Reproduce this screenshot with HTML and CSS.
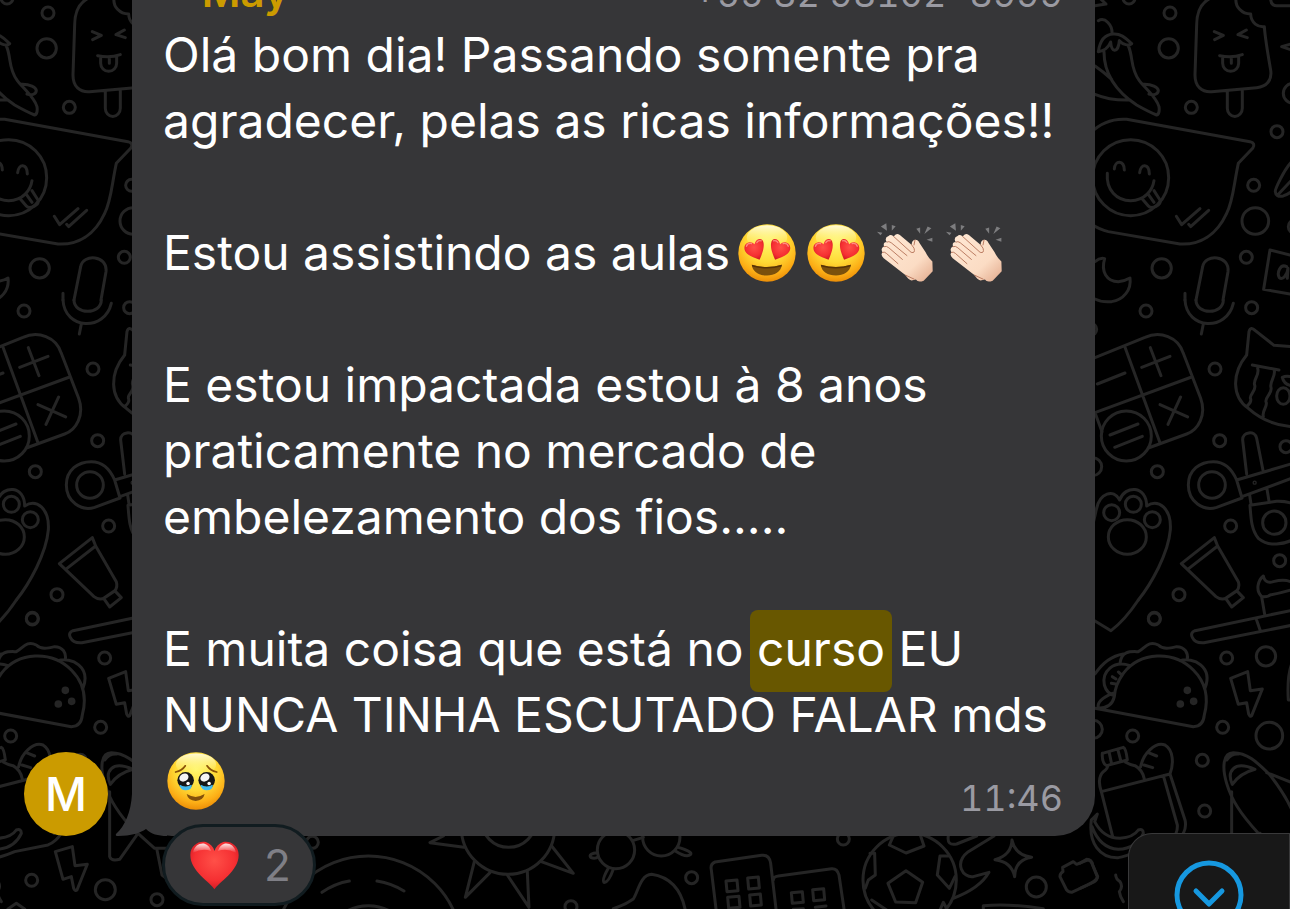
FILE: index.html
```html
<!DOCTYPE html>
<html lang="pt-BR">
<head>
<meta charset="utf-8">
<meta name="viewport" content="width=device-width, initial-scale=1">
<title>Conversa</title>
<link rel="stylesheet" href="styles.css">
</head>
<body>
<svg class="wallpaper" aria-hidden="true">
  <defs>
    <g id="tile">
      <g transform="translate(1080 0) scale(.3333)">
        <circle cx="147" cy="-6" r="18"/><circle cx="270" cy="39" r="18"/><circle cx="266" cy="145" r="29"/><circle cx="334" cy="322" r="18"/><circle cx="591" cy="395" r="18"/><circle cx="521" cy="556" r="18"/><circle cx="526" cy="663" r="40"/><circle cx="499" cy="772" r="18"/><circle cx="245" cy="805" r="29"/><circle cx="640" cy="280" r="30"/><circle cx="645" cy="680" r="20"/>
        <path d="M390-5C362 10 350 35 350 75L345 225C345 260 365 277 395 275L530 263C560 260 577 240 572 210C565 170 556 120 553 80C535 82 513 70 512 42C485 42 465 20 468-5M442 273V325A22 24 0 0 0 487 325V270M403 95L430 106L404 119M499 90L474 104L502 113M419 167Q455 175 487 164M428 170V190A23 23 0 0 0 476 190V168M454 172V190"/>
        <path d="M55 62C75 50 98 75 96 102M55 155C60 120 75 103 100 102C125 100 140 118 155 131C145 138 130 135 118 122C117 140 110 150 104 151C96 150 93 140 92 126C86 140 78 152 55 155M72 155C72 220 110 275 170 315Q205 335 230 345Q240 342 237 320C228 290 200 270 178 242C150 205 160 170 145 138M190 253C215 252 235 262 235 272C234 284 220 286 207 282M45 198Q70 215 95 238M45 283Q90 302 150 300M40 18L78 12L60-5"/>
        <path d="M30 400C60 370 95 355 140 358L510 425Q528 430 518 445L475 490C460 560 460 600 440 640C410 705 360 735 300 732L85 695Q60 690 30 670"/>
        <circle cx="152" cy="533" r="114"/>
        <path d="M103 507C105 480 132 480 133 510M179 518C182 490 207 490 208 522M82 520C78 570 110 602 152 602C195 602 218 570 222 542M187 597L205 618C215 630 245 615 240 600L222 572M205 583L222 607M289 649L305 674L360 626M326 673L332 680L386 631"/>
        <path d="M45 785Q60 772 74 776C62 815 80 845 115 845Q135 843 150 834C155 870 130 900 95 905Q65 908 45 897M348 900L368 800C375 760 450 765 444 815L429 900M315 880L315 900"/>
        <path d="M630 765L570 750L551 868L630 882M620 800C600 790 590 820 598 833C608 842 622 825 624 805L622 835M572-5Q572 17 590 17H640M640 130L605 140L640 152M640 480C610 510 585 570 586 575Q587 592 610 588Q630 580 640 570M595 583L640 535"/>
      </g>
      <g transform="translate(1080 300) scale(.3333)">
        <circle cx="198" cy="33" r="18"/><circle cx="515" cy="23" r="18"/><circle cx="405" cy="207" r="18"/><circle cx="419" cy="422" r="18"/><circle cx="232" cy="515" r="18"/><circle cx="618" cy="440" r="18"/><circle cx="452" cy="678" r="18"/><circle cx="599" cy="782" r="18"/><circle cx="297" cy="884" r="18"/><circle cx="223" cy="955" r="18"/><circle cx="32" cy="88" r="18"/><circle cx="38" cy="500" r="27"/>
        <path d="M315 0C320 90 440 95 460 10M348 0C348 45 430 45 430 0M370 72L364 102"/>
        <path d="M45 173L195 112C240 92 295 110 310 160L362 295C380 345 355 390 320 402L205 444M135 142L240 428M45 338L335 231M45 338L66 395M52 252L135 219M185 202L270 169M211 143L243 227M240 314L323 351M302 291L264 373M90 405L174 372M104 442L187 409"/>
        <circle cx="139" cy="408" r="75"/>
        <path d="M640 140L582 136L526 92Q512 78 507 95L500 165C455 220 455 290 505 325C550 365 600 378 640 380M517 195L597 210M533 205C540 225 518 240 524 255C530 275 505 285 512 297C515 308 505 315 500 320M583 212C587 230 568 245 573 262C578 280 555 290 558 305C565 320 545 330 550 350M640 232Q620 226 607 232Q612 255 640 258"/>
        <ellipse cx="610" cy="288" rx="20" ry="25"/>
        <path d="M486 594L410 622C370 635 325 605 325 555C325 510 360 485 400 485C435 485 455 505 470 540ZM470 540L640 490M486 590L640 533M500 522L488 420C487 395 525 390 530 415L549 511M509 585L513 612M561 567L567 603M640 612Q620 603 590 604L510 616C513 660 515 690 535 715Q560 735 590 732Q620 730 640 718"/>
        <circle cx="396" cy="555" r="40"/><circle cx="583" cy="668" r="35"/><circle cx="524" cy="548" r="2"/>
        <path d="M30 700C45 660 45 640 50 625C60 580 100 565 119 600C135 555 200 555 200 618C235 595 275 625 271 690C265 760 215 850 175 900"/>
        <circle cx="95" cy="638" r="24"/><circle cx="160" cy="613" r="24"/><circle cx="217" cy="659" r="24"/><ellipse cx="142" cy="711" rx="57" ry="52"/>
        <path d="M403 713L304 791L408 890Q425 903 441 893L470 873Q480 862 475 845L413 738ZM413 738L326 806M437 895L470 872L490 893L455 921ZM554 943L545 890C525 870 535 840 550 828C555 850 570 848 580 845Q620 835 640 850M545 890Q565 892 570 885Q600 880 640 868"/>
      </g>
      <g transform="translate(1080 600) scale(.3333)">
        <circle cx="223" cy="57" r="18"/><circle cx="440" cy="174" r="18"/><circle cx="558" cy="169" r="29"/><circle cx="428" cy="382" r="18"/><circle cx="568" cy="407" r="40"/><circle cx="158" cy="408" r="18"/><circle cx="367" cy="481" r="18"/><circle cx="374" cy="633" r="18"/><circle cx="40" cy="388" r="27"/><circle cx="221" cy="841" r="18"/><circle cx="442" cy="869" r="30"/><circle cx="597" cy="899" r="18"/>
        <path d="M175 0Q135 60 93 92L40 60M640 30L345 92Q330 98 337 112Q345 130 372 128L640 75M528 55L541 92"/>
        <path d="M45 325L340 380Q370 380 373 345C385 300 380 250 340 210C280 150 180 155 130 220Q105 255 103 290Q95 325 55 325Q48 300 98 280M120 190C125 150 155 155 175 155C195 145 205 120 235 135C250 150 270 145 290 140C315 140 325 160 322 178M300 182C340 170 400 200 375 265M45 222Q80 170 130 162M150 197C100 180 65 215 73 255Q80 280 103 287M97 230L108 237M94 250L107 252M115 216L124 224"/>
        <g class="wallpaper__dots"><circle cx="322" cy="271" r="7"/><circle cx="301" cy="312" r="7"/><circle cx="341" cy="304" r="7"/></g>
        <path d="M452 235L503 215L511 272L547 267L515 347Q510 352 506 342L500 308L475 313ZM292 755L343 740L351 797L388 793L357 870Q352 875 347 865L340 830L315 838Z"/>
        <path d="M67 460L130 442Q138 445 142 480L80 497Q65 490 67 460M87 455L95 492M113 447L123 485M82 497Q85 505 70 515Q50 535 64 575L98 710M64 575L270 522M137 487Q150 495 165 497Q188 510 193 537M182 500C190 460 225 425 255 435C280 450 282 490 270 522L315 660Q320 680 310 700M250 527L292 675Q293 690 288 700M205 458L230 468M192 495L218 503"/>
        <path d="M34 660L52 642L44 665Q70 715 120 715Q160 712 175 690Q190 685 190 700Q170 745 115 748Q60 745 36 680M34 660C25 730 60 775 115 773Q135 770 170 755L270 735Q295 725 310 700M0 790L20 778Q35 778 38 795L53 830Q50 845 0 865M107 825Q108 838 120 845Q130 860 118 875Q120 890 130 905M150 927L175 910L200 927"/>
        <path d="M455 575V770Q460 785 485 778L540 700M535 700C480 640 455 600 440 550C425 500 430 458 460 458C500 458 530 485 570 525Q620 590 640 640M457 553C440 515 460 480 525 508Q480 520 457 553M440 480Q455 460 475 462M560 518L640 550M540 700L590 745H630M596 745L612 825L625 835"/>
        <path d="M640 180Q620 220 625 300H640"/>
      </g>
    </g>
  </defs>
  <use href="#tile"/>
  <use href="#tile" x="-1122"/>
  <g transform="translate(300 820) scale(.3333)">
    <circle cx="37" cy="67" r="18"/><circle cx="813" cy="260" r="18"/><circle cx="1175" cy="173" r="18"/><circle cx="624" cy="23" r="140"/><circle cx="626" cy="0" r="82"/><circle cx="205" cy="390" r="282"/><circle cx="205" cy="390" r="133"/><circle cx="948" cy="90" r="56"/><circle cx="1084" cy="52" r="56"/>
    <path d="M430 48L390 68L492 82M523 125L496 232L570 158M622 165L687 262L682 155M722 124L820 160L755 78M66 217Q105 190 148 183M231 183Q275 190 312 213M998 62L1030 52M893 98Q865 100 872 112Q885 118 895 110M925 145Q905 180 912 187Q925 190 940 148M1125 92Q1160 115 1172 103Q1178 95 1135 82M940 266Q975 255 1000 237C1015 215 1020 165 1055 163Q1135 175 1155 266"/>
  </g>
  <g transform="translate(690 820) scale(.3333)">
    <circle cx="460" cy="57" r="18"/><circle cx="1039" cy="201" r="30"/><circle cx="659" cy="180" r="140"/>
    <path d="M78 266L64 150Q60 132 75 126L215 106Q238 103 242 130L258 266M250 180Q250 170 265 168L425 146Q442 145 447 165L462 266M108 183L141 180L144 212L111 215ZM173 174L205 171L208 204L176 207ZM113 232L147 229L150 262L116 265ZM179 225L211 222L214 255L182 258ZM304 218L337 215L340 247L307 250ZM368 209L401 206L404 239L371 242ZM310 268L340 266M376 262L408 258"/>
    <path d="M648 152L698 187L677 248L617 246L594 190ZM610 48L598 75L648 99L702 78L692 48M540 100H554L556 165L535 180L526 205M775 108H750L742 165L778 205L795 170M545 240L590 270M750 270L760 247L768 262"/>
    <path d="M966 60Q975 105 1025 112Q975 120 974 170Q965 125 915 119Q965 105 966 60ZM775 48Q770 78 800 72L860 48M912 48L835 95C790 130 820 175 850 170L897 157Q870 205 790 235M1118 142L1150 125L1160 133L1192 120Q1202 120 1206 130L1222 170Q1222 180 1212 186L1145 217Q1135 217 1130 210L1110 170Q1110 160 1119 155ZM880 266V257Q960 250 1060 266"/>
  </g>
</svg>

<svg class="sprite" aria-hidden="true">
  <defs>
    <radialGradient id="skin" cx=".5" cy=".3" r=".72"><stop offset="0" stop-color="#fff66a"/><stop offset=".5" stop-color="#ffda35"/><stop offset=".8" stop-color="#fcae16"/><stop offset="1" stop-color="#e98905"/></radialGradient>
    <linearGradient id="shine" x2="0" y2="1"><stop offset="0" stop-color="#fffde8" stop-opacity=".9"/><stop offset="1" stop-color="#fff66a" stop-opacity="0"/></linearGradient>
    <radialGradient id="love" cx=".5" cy=".4" r=".6"><stop offset="0" stop-color="#ff5048"/><stop offset=".7" stop-color="#f52f32"/><stop offset="1" stop-color="#d51c25"/></radialGradient>
    <linearGradient id="hand" x2="1" y2="1"><stop offset="0" stop-color="#ffe9d5"/><stop offset=".65" stop-color="#fbdcc4"/><stop offset="1" stop-color="#e2a98b"/></linearGradient>
    <linearGradient id="gloss" x2="0" y2="1"><stop offset="0" stop-color="#fff" stop-opacity=".9"/><stop offset="1" stop-color="#fff" stop-opacity="0"/></linearGradient>
  </defs>
  <symbol id="in-love" viewBox="0 0 172 172">
    <circle cx="86" cy="86" r="85" fill="url(#skin)"/><ellipse cx="86" cy="40" rx="60" ry="36" fill="url(#shine)"/>
    <g id="eye-heart"><path d="M64 106C45 98 20 92 19 72C18 54 40 48 49 60C53 42 74 38 76 58C78 74 70 92 64 106Z" fill="url(#love)"/><path d="M25 66Q28 56 40 58M56 55Q60 47 69 50" fill="none" stroke="#ffb0a0" stroke-width="4" stroke-linecap="round" opacity=".7"/></g>
    <use href="#eye-heart" transform="translate(174 0) scale(-1 1)"/>
    <path d="M41 121Q86 134 130 121C128 142 108 153 86 153C62 153 43 142 41 121Z" fill="#7b500c"/><path d="M41 121Q86 134 130 121L129 126Q86 138 42 126Z" fill="#573306"/>
  </symbol>
  <symbol id="clap" viewBox="442 30 180 186">
    <path fill="#7d7d7f" d="M457 41L474 31L476 54ZM445 57L462 60L456 68ZM491 36L503 40L491 54ZM567 48L579 44L579 63ZM614 46L602 41L592 64ZM599 82L617 76V88Z"/>
    <path d="M553 98Q552 85 563 82Q572 81 577 92L596 121Q602 135 617 149L618 180L590 209Q572 216 566 205L552 208Q542 206 534 192L466 139Q455 130 462 121Q455 107 467 103Q463 89 475 89Q467 75 481 70Q487 64 497 72Q504 59 516 67Z" fill="url(#hand)"/>
    <path d="M462 121Q468 118 474 124L510 156M467 103Q475 100 482 107L524 143M476 89Q482 85 489 91L538 131M497 72L551 121Q565 125 560 108L552 97M563 83L560 98M534 192L560 204" fill="none" stroke="#ba795f" stroke-width="3" stroke-linecap="round"/>
  </symbol>
  <symbol id="pleading" viewBox="0 0 168 168">
    <circle cx="84" cy="84" r="83" fill="url(#skin)"/><ellipse cx="84" cy="36" rx="58" ry="32" fill="url(#shine)"/>
    <path id="brow" d="M25 58Q44 54 53 40" fill="none" stroke="#8a5208" stroke-width="5" stroke-linecap="round"/>
    <use href="#brow" transform="translate(169 0) scale(-1 1)"/>
    <g id="pupil"><circle cx="54" cy="82" r="24" fill="#171717"/><path d="M36 96Q54 90 72 96Q70 111 54 111Q39 110 36 96Z" fill="#43b9ec"/><path d="M33 92Q54 108 75 92Q54 94 33 92Z" fill="#171717"/><ellipse cx="49" cy="74" rx="14" ry="11" fill="#f4f4f4" transform="rotate(-30 49 74)"/><circle cx="61" cy="91" r="5" fill="#fff"/></g>
    <use href="#pupil" x="61"/>
    <path d="M57 122Q83 138 109 122Q105 141 83 142Q61 141 57 122Z" fill="#82500b"/>
  </symbol>
  <symbol id="heart" viewBox="0 0 148 148">
    <path d="M74 146C62 124 1 92 1 42C1 12 28-2 48 3Q68 10 74 30Q80 10 100 3C120-2 147 12 147 42C147 92 86 124 74 146Z" fill="url(#love)"/>
    <path d="M9 36C12 14 30 5 44 8Q58 12 64 30Q36 20 9 36ZM139 36C136 14 118 5 104 8Q90 12 84 30Q112 20 139 36Z" fill="url(#gloss)"/>
  </symbol>
</svg>

<main class="chat">
  <article class="message">
    <div class="avatar" aria-label="May">M</div>
    <div class="bubble">
      <header class="bubble__header">
        <span class="bubble__author">~ May</span>
        <span class="bubble__phone">+55 82 98102-8999</span>
      </header>
      <div class="bubble__text">
        <p>Olá bom dia! Passando somente pra<br>agradecer, pelas as ricas informações!!</p>
        <p class="bubble__row">Estou assistindo as aulas
          <span class="emojis">
            <svg class="emoji" role="img" aria-label="Apaixonado"><use href="#in-love"/></svg>
            <svg class="emoji" role="img" aria-label="Apaixonado"><use href="#in-love"/></svg>
            <svg class="emoji emoji--clap" role="img" aria-label="Palmas"><use href="#clap"/></svg>
            <svg class="emoji emoji--clap" role="img" aria-label="Palmas"><use href="#clap"/></svg>
          </span>
        </p>
        <p>E estou impactada estou à 8 anos<br>praticamente no mercado de<br>embelezamento dos fios.....</p>
        <p>E muita coisa que está no <mark>curso</mark> EU<br>NUNCA TINHA ESCUTADO FALAR mds</p>
      </div>
      <footer class="bubble__footer">
        <svg class="emoji" role="img" aria-label="Emocionado"><use href="#pleading"/></svg>
        <time datetime="11:46">11:46</time>
      </footer>
      <svg class="bubble__tail" viewBox="0 0 54 56" aria-hidden="true"><path d="M17 0V14C16 32 10 46 1 54Q0 56 3 56C16 56 25 53 31 49C36 54 43 56 52 56V0Z"/></svg>
      <button class="reaction" type="button"><svg class="reaction__heart" role="img" aria-label="Coração"><use href="#heart"/></svg><span>2</span></button>
    </div>
  </article>
</main>

<button class="jump" type="button" aria-label="Ir para a última mensagem">
  <svg viewBox="0 0 70 70" aria-hidden="true"><circle cx="35" cy="35" r="32"/><path d="M22 31L35 44L48 31"/></svg>
</button>
</body>
</html>
```
FILE: styles.css
```css
* { box-sizing: border-box; }

body {
  position: relative;
  height: 100vh;
  margin: 0;
  overflow: hidden;
  background: #000;
  color: #fff;
  font-family: Inter, "Liberation Sans", sans-serif;
}

button { font: inherit; }

p { margin: 0; }

.wallpaper {
  position: absolute;
  inset: 0;
  width: 100%;
  height: 100%;
  fill: none;
  stroke: #252525;
  stroke-width: 9;
  stroke-linecap: round;
  stroke-linejoin: round;
}

.wallpaper__dots { fill: #252525; }

.sprite {
  position: absolute;
  width: 0;
  height: 0;
}

.chat {
  position: relative;
  display: flex;
  flex-direction: column;
  justify-content: flex-end;
  height: 100%;
  padding: 0 195px 73px 24px;
}

.message {
  display: flex;
  flex-shrink: 0;
  align-items: flex-end;
  gap: 24px;
}

.avatar {
  display: flex;
  flex: none;
  align-items: center;
  justify-content: center;
  width: 84px;
  height: 84px;
  border-radius: 50%;
  background: #cb9b00;
  font-size: 46px;
  font-weight: 500;
}

.bubble {
  position: relative;
  flex: 1;
  min-width: 0;
  padding: 20px 32px 22px 31px;
  border-radius: 40px;
  background: #363638;
}

.bubble__header {
  display: flex;
  align-items: baseline;
  justify-content: space-between;
  line-height: 56px;
}

.bubble__author {
  color: #cb9b00;
  font-size: 42px;
  font-weight: 600;
}

.bubble__phone {
  color: #9a9aa2;
  font-size: 36px;
  font-variant-numeric: tabular-nums;
}

.bubble__text {
  display: grid;
  gap: 66px;
  font-size: 48px;
  line-height: 66px;
  white-space: nowrap;
}

.bubble__row {
  display: flex;
  align-items: center;
  gap: 8px;
}

.emojis {
  display: flex;
  align-items: center;
  gap: 11px;
}

.emoji {
  display: block;
  width: 58px;
  height: 58px;
}

.emoji--clap { height: 62px; }

mark {
  margin: 0 -7px;
  padding: 9px 7px 14px;
  border-radius: 8px;
  background: #685700;
  color: inherit;
}

.bubble__footer {
  display: flex;
  align-items: center;
  justify-content: space-between;
  height: 66px;
  padding-left: 4px;
}

.bubble__footer time {
  align-self: flex-end;
  color: #9a9aa2;
  font-size: 36px;
  font-variant-numeric: tabular-nums;
  line-height: 32px;
}

.bubble__tail {
  position: absolute;
  bottom: 0;
  left: -17px;
  width: 54px;
  height: 56px;
  fill: #363638;
}

.reaction {
  position: absolute;
  bottom: -70px;
  left: 30px;
  display: flex;
  align-items: center;
  gap: 25px;
  height: 82px;
  padding: 0 22px 0 25px;
  border: 3px solid #111c20;
  border-radius: 41px;
  background: #363638;
  color: #7f7f86;
  font-size: 44px;
}

.reaction__heart {
  width: 49px;
  height: 49px;
}

.jump {
  position: absolute;
  right: 0;
  bottom: 0;
  display: flex;
  align-items: flex-start;
  justify-content: center;
  width: 162px;
  height: 76px;
  padding: 26px 0 0;
  overflow: hidden;
  border: 1px solid #39393a;
  border-bottom: 0;
  border-radius: 24px 0 0;
  background: #181818;
}

.jump svg {
  flex: none;
  width: 70px;
  height: 70px;
  fill: none;
  stroke: #1698e0;
  stroke-width: 5;
  stroke-linecap: round;
  stroke-linejoin: round;
}
```
